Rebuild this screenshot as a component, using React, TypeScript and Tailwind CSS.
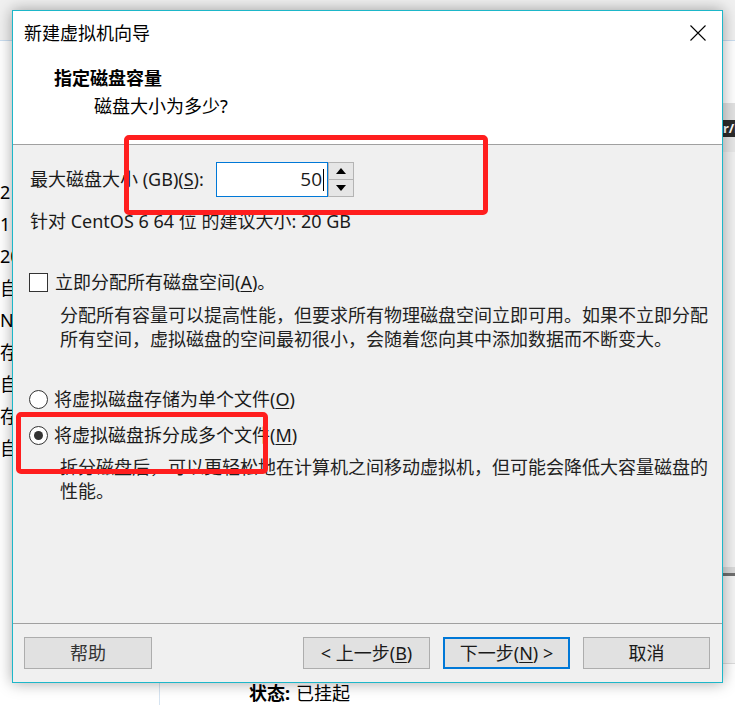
import React from "react"

const leftRows = ["2 GB", "1", "20 GB", "自动", "NAT", "存在", "自动检测", "存在", "自动检测"]

function Background() {
  return (
    <div className="flex h-full flex-col">
      {/* top strip of the window behind */}
      <div className="h-[41px] shrink-0 border-b border-[#c9ddf0] bg-[#f0f0f0]" />
      <div className="flex flex-1">
        {/* left list of the app behind, mostly covered by the dialog */}
        <div className="flex w-[160px] shrink-0 flex-col border-r border-[#d6e4f1] pt-[135px]">
          {leftRows.map((r, i) => (
            <div key={i} className="h-[32px] w-[12px] overflow-hidden whitespace-nowrap leading-[32px]">
              {r}
            </div>
          ))}
        </div>
        {/* main area of the app behind */}
        <div className="flex flex-1 flex-col">
          <div className="h-[62px] shrink-0 bg-white" />
          <div className="h-[17px] shrink-0 bg-[#e2e2e2]" />
          <div className="flex h-[17px] shrink-0 items-center overflow-hidden whitespace-nowrap bg-[#2b2b2b] pl-[563px] text-[13px] font-bold text-white">
            r/local
          </div>
          <div className="h-[15px] shrink-0 bg-[#e7e7e7]" />
          <div className="h-[415px] shrink-0 bg-[#f1f1f1]" />
          <div className="h-[6px] shrink-0 bg-[#d9d9d9]" />
          <div className="h-[3px] shrink-0 bg-[#6f6f6f]" />
          <div className="flex-1 border-b border-[#dcdcdc] bg-[#f4f4f4]" />
          <div className="flex h-[41px] shrink-0 items-end bg-white pl-[89px] leading-[24px]">
            <span className="font-bold">状态:</span>
            <span className="ml-[6px]">已挂起</span>
          </div>
        </div>
      </div>
    </div>
  )
}

function CloseIcon() {
  return (
    <svg width="16" height="16" viewBox="0 0 16 16" className="text-black">
      <path d="M0.5 0.5 L15.5 15.5 M15.5 0.5 L0.5 15.5" stroke="currentColor" strokeWidth="1.1" fill="none" />
    </svg>
  )
}

function SpinBox() {
  return (
    <div className="flex h-[35px]">
      <div className="flex h-[35px] w-[112px] items-center justify-end border border-[#0078d7] bg-white pr-[3px] text-[19px] font-['Open_Sans','Noto_Sans_CJK_SC',sans-serif]">
        <span>50</span>
        <span className="ml-px h-[22px] w-px bg-black" />
      </div>
      <div className="flex w-[26px] flex-col border border-[#b4b4b4] bg-[#e6e6e6]">
        <div className="flex flex-1 items-center justify-center border-b border-[#b4b4b4]">
          <svg width="10" height="6" viewBox="0 0 10 6">
            <path d="M5 0 L10 6 L0 6 Z" fill="#000" />
          </svg>
        </div>
        <div className="flex flex-1 items-center justify-center">
          <svg width="10" height="6" viewBox="0 0 10 6">
            <path d="M0 0 L10 0 L5 6 Z" fill="#000" />
          </svg>
        </div>
      </div>
    </div>
  )
}

function Radio({ checked }: { checked?: boolean }) {
  return (
    <span className="flex h-[19px] w-[19px] shrink-0 items-center justify-center rounded-full border border-[#333] bg-white">
      {checked && <span className="h-[9px] w-[9px] rounded-full bg-[#333]" />}
    </span>
  )
}

function Btn({ children, primary }: { children: React.ReactNode; primary?: boolean }) {
  return (
    <button
      className={
        primary
          ? "flex h-[32px] w-[127px] items-center justify-center border-2 border-[#0078d7] bg-[#e1e1e1] text-[#1a1a1a]"
          : "flex h-[32px] w-[127px] items-center justify-center border border-[#adadad] bg-[#e1e1e1] text-[#1a1a1a]"
      }
    >
      {children}
    </button>
  )
}

function Dialog() {
  return (
    <div className="absolute left-[12px] top-[10px] flex h-[673px] w-[711px] flex-col border border-[#1db7c9] bg-white shadow-[0_0_14px_rgba(0,0,0,0.35)]">
      {/* title + header */}
      <div className="flex h-[134px] shrink-0 flex-col border-b border-[#a0a0a0] bg-white">
        <div className="flex h-[44px] items-center justify-between pl-[11px] pr-[16px]">
          <span>新建虚拟机向导</span>
          <CloseIcon />
        </div>
        <div className="mt-[11px] pl-[41px] font-bold leading-[24px]">指定磁盘容量</div>
        <div className="mt-[4px] pl-[81px] leading-[24px]">磁盘大小为多少?</div>
      </div>

      {/* body */}
      <div className="flex flex-1 flex-col bg-[#f0f0f0] pl-[17px] text-[#1a1a1a]">
        <div className="mt-[17px] flex h-[35px] items-center">
          <span className="w-[186px] whitespace-nowrap">
            最大磁盘大小 (GB)(<span className="underline underline-offset-2">S</span>):
          </span>
          <SpinBox />
        </div>
        <div className="mt-[12px] h-[24px] whitespace-nowrap leading-[24px]">针对 CentOS 6 64 位 的建议大小: 20 GB</div>

        <div className="mt-[37px] flex h-[24px] items-center -ml-px">
          <span className="h-[19px] w-[19px] shrink-0 border border-[#333] bg-white" />
          <span className="ml-[7px] whitespace-nowrap">
            立即分配所有磁盘空间(<span className="underline underline-offset-2">A</span>)。
          </span>
        </div>
        <div className="mt-[9px] whitespace-nowrap pl-[30px] leading-[24px] text-[#222]">
          分配所有容量可以提高性能，但要求所有物理磁盘空间立即可用。如果不立即分配
          <br />
          所有空间，虚拟磁盘的空间最初很小，会随着您向其中添加数据而不断变大。
        </div>

        <div className="mt-[36px] flex h-[24px] items-center -ml-px">
          <Radio />
          <span className="ml-[6px] whitespace-nowrap">
            将虚拟磁盘存储为单个文件(<span className="underline underline-offset-2">O</span>)
          </span>
        </div>
        <div className="mt-[12px] flex h-[24px] items-center -ml-px">
          <Radio checked />
          <span className="ml-[6px] whitespace-nowrap">
            将虚拟磁盘拆分成多个文件(<span className="underline underline-offset-2">M</span>)
          </span>
        </div>
        <div className="mt-[8px] whitespace-nowrap pl-[30px] leading-[24px] text-[#222]">
          拆分磁盘后，可以更轻松地在计算机之间移动虚拟机，但可能会降低大容量磁盘的
          <br />
          性能。
        </div>
      </div>

      {/* buttons */}
      <div className="flex h-[59px] shrink-0 items-start border-t border-[#a0a0a0] bg-[#f0f0f0] pl-[11px] pr-[12px] pt-[13px]">
        <button className="flex h-[32px] w-[128px] items-center justify-center border border-[#adadad] bg-[#e1e1e1] text-[#333]">
          帮助
        </button>
        <div className="flex-1" />
        <div className="flex gap-[13px]">
          <Btn>
            &lt; 上一步(<span className="underline underline-offset-2">B</span>)
          </Btn>
          <Btn primary>
            下一步(<span className="underline underline-offset-2">N</span>) &gt;
          </Btn>
          <Btn>取消</Btn>
        </div>
      </div>
    </div>
  )
}

export default function App() {
  return (
    <div className="relative h-[705px] w-[735px] overflow-hidden bg-white font-['Noto_Sans','Noto_Sans_CJK_SC',sans-serif] text-[18px] text-black">
      <Background />
      <Dialog />
      {/* red annotation boxes */}
      <div className="pointer-events-none absolute left-[124px] top-[135px] h-[80px] w-[364px] rounded-[5px] border-[5px] border-[#ff1e1e]" />
      <div className="pointer-events-none absolute left-[16px] top-[412px] h-[62px] w-[252px] rounded-[5px] border-[5px] border-[#ff1e1e]" />
    </div>
  )
}
